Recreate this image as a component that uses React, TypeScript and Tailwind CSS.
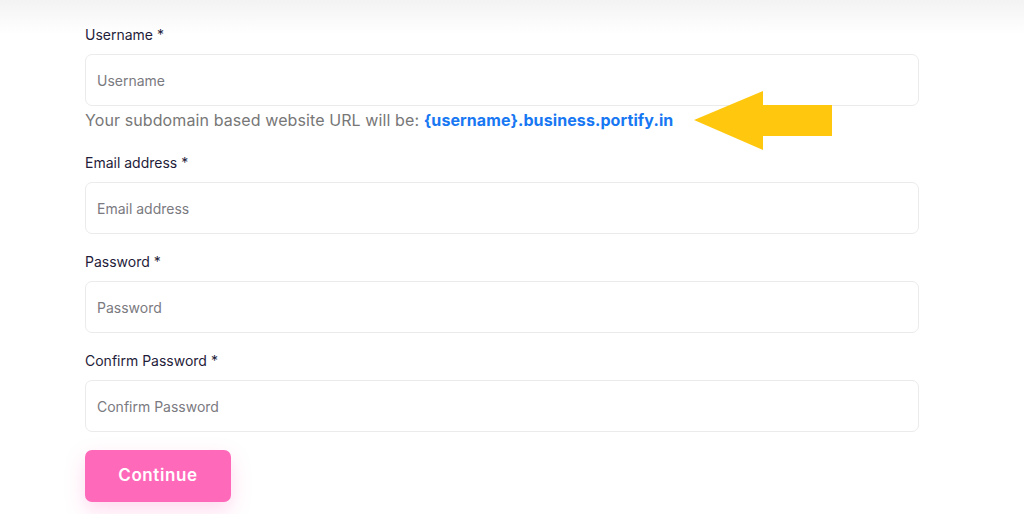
import React from "react";

function Field({ label, placeholder, type = "text" }: { label: string; placeholder: string; type?: string }) {
  return (
    <div className="flex flex-col">
      <label className="text-[14px] leading-[20px] text-[#1f1d3a] mb-[9px]">{label} *</label>
      <input
        type={type}
        placeholder={placeholder}
        className="h-[52px] w-full rounded-[7px] border border-[#ebebeb] bg-white px-[11px] text-[14px] text-[#333] placeholder:text-[#7a7a80] outline-none"
      />
    </div>
  );
}

export default function App() {
  return (
    <div
      className="min-h-[514px] w-[1024px] bg-[linear-gradient(to_bottom,#f3f3f3_0px,#ffffff_34px,#ffffff_100%)]"
      style={{ fontFamily: "Inter, 'Noto Sans', sans-serif" }}
    >
      <div className="ml-[85px] w-[834px] pt-[25px]">
        <Field label="Username" placeholder="Username" />
        <div className="flex items-center h-[26px] mt-[1px]">
          <span className="text-[16px] text-[#777] tracking-[0.1px]">
            Your subdomain based website URL will be:{" "}
            <span className="font-bold text-[#1877f2]">{"{username}"}.business.portify.in</span>
          </span>
          <svg className="ml-[21px] mt-[1px]" width="140" height="60" viewBox="0 0 140 60">
            <polygon points="0,29 69,0 69,14 138,14 138,45 69,45 69,59" fill="#ffc80f" />
          </svg>
        </div>
        <div className="mt-[20px] flex flex-col gap-[18px]">
          <Field label="Email address" placeholder="Email address" type="email" />
          <Field label="Password" placeholder="Password" type="password" />
          <Field label="Confirm Password" placeholder="Confirm Password" type="password" />
        </div>
        <button className="mt-[18px] h-[52px] w-[146px] rounded-[7px] bg-[#ff69ba] text-[17px] font-semibold tracking-[0.6px] text-white shadow-[0_8px_20px_rgba(255,105,186,0.25)]">
          Continue
        </button>
      </div>
    </div>
  );
}
